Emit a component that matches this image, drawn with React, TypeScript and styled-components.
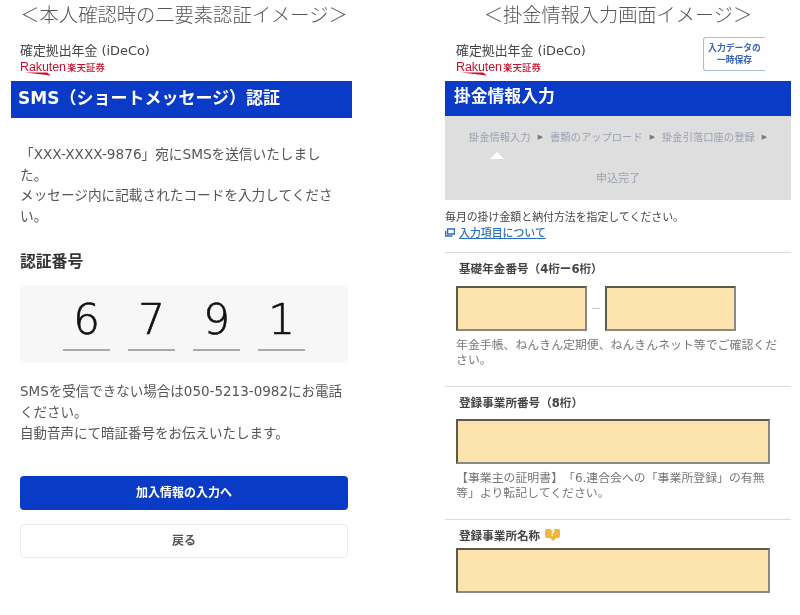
import * as React from "react";
import styled, { createGlobalStyle } from "styled-components";

const GlobalStyle = createGlobalStyle`
  html, body {
    margin: 0;
    padding: 0;
    background: #fff;
  }
  body {
    font-family: "DejaVu Sans", "Noto Sans CJK JP", sans-serif;
    color: #444;
    text-spacing-trim: space-all;
  }
`;

function Logo() {
  return (
    <LogoBlock>
      <LogoTitle>確定拠出年金 (iDeCo)</LogoTitle>
      <RakutenRow>
        <RakutenMark>
          Rakuten
          <svg width="26" height="4" viewBox="0 0 26 4">
            <path d="M0 0.6 L22 0.6 L26 3.6 Z" fill="#c8102e" />
          </svg>
        </RakutenMark>
        <RakutenJa>楽天証券</RakutenJa>
      </RakutenRow>
    </LogoBlock>
  );
}

function Field({ label, wide }: { label?: string; wide?: boolean }) {
  return <FieldBox $wide={wide} aria-label={label} />;
}

export default function App() {
  return (
    <>
      <GlobalStyle />
      <Page>
        <LeftColumn>
          <Title>＜本人確認時の二要素認証イメージ＞</Title>
          <LeftHeader>
            <Logo />
          </LeftHeader>
          <LeftBar>SMS（ショートメッセージ）認証</LeftBar>
          <LeftBody>
            <Message>
              「XXX-XXXX-9876」宛にSMSを送信いたしまし
              <br />
              た。
              <br />
              メッセージ内に記載されたコードを入力してくださ
              <br />
              い。
            </Message>
            <CodeLabel>認証番号</CodeLabel>
            <CodeBox>
              {["6", "7", "9", "1"].map((d) => (
                <Digit key={d}>{d}</Digit>
              ))}
            </CodeBox>
            <Notice>
              SMSを受信できない場合は050-5213-0982にお電話
              <br />
              ください。
              <br />
              自動音声にて暗証番号をお伝えいたします。
            </Notice>
            <PrimaryButton>加入情報の入力へ</PrimaryButton>
            <BackButton>戻る</BackButton>
          </LeftBody>
        </LeftColumn>

        <RightColumn>
          <Title $right>＜掛金情報入力画面イメージ＞</Title>
          <RightHeader>
            <Logo />
            <SaveButton>
              入力データの
              <br />
              一時保存
            </SaveButton>
          </RightHeader>
          <RightBar>掛金情報入力</RightBar>
          <Steps>
            <StepRow>
              <span>掛金情報入力</span>
              <StepArrow>▶</StepArrow>
              <span>書類のアップロード</span>
              <StepArrow>▶</StepArrow>
              <span>掛金引落口座の登録</span>
              <StepArrow>▶</StepArrow>
            </StepRow>
            <StepCaret />
            <StepLast>申込完了</StepLast>
          </Steps>
          <Intro>毎月の掛け金額と納付方法を指定してください。</Intro>
          <HelpLink>
            <svg width="10" height="9" viewBox="0 0 10 9">
              <path d="M2.5 1h7v5h-7zM0.5 3v5h7" fill="none" stroke="#2a6fc0" strokeWidth="1.4" />
            </svg>
            <a>入力項目について</a>
          </HelpLink>

          <Sections>
            <Section $height={134} $gap={10}>
              <FieldLabel>基礎年金番号（4桁ー6桁）</FieldLabel>
              <SplitRow>
                <Field label="基礎年金番号 前半" />
                <Dash>ー</Dash>
                <Field label="基礎年金番号 後半" />
              </SplitRow>
              <Help>
                年金手帳、ねんきん定期便、ねんきんネット等でご確認くだ
                <br />
                さい。
              </Help>
            </Section>

            <Section $height={133} $gap={9}>
              <FieldLabel>登録事業所番号（8桁）</FieldLabel>
              <Field label="登録事業所番号" wide />
              <Help>
                【事業主の証明書】「6.連合会への「事業所登録」の有無
                <br />
                等」より転記してください。
              </Help>
            </Section>

            <Section $height={90} $gap={5}>
              <FieldLabel>
                登録事業所名称
                <Hint>?</Hint>
              </FieldLabel>
              <Field label="登録事業所名称" wide />
            </Section>
          </Sections>
        </RightColumn>
      </Page>
    </>
  );
}

const Page = styled.div`
  width: 800px;
  height: 615px;
  display: flex;
  overflow: hidden;
  filter: blur(0.45px);
`;

const LeftColumn = styled.div`
  width: 445px;
  flex: none;
  padding-left: 11px;
  box-sizing: border-box;
`;

const RightColumn = styled.div`
  width: 346px;
  flex: none;
`;

const Title = styled.div<{ $right?: boolean }>`
  width: 346px;
  height: 30px;
  line-height: 28px;
  text-align: center;
  font-family: "Noto Sans CJK JP", serif;
  font-weight: 300;
  font-size: ${(p) => (p.$right ? "19.2px" : "19.3px")};
  white-space: nowrap;
  color: #555;
`;

const LeftHeader = styled.div`
  height: 51px;
  padding: 13px 0 0 9px;
  box-sizing: border-box;
`;

const RightHeader = styled.div`
  height: 51px;
  padding: 7px 26px 0 11px;
  box-sizing: border-box;
  display: flex;
  justify-content: space-between;
  align-items: flex-start;

  & > div:first-child {
    margin-top: 6px;
  }
`;

const LogoBlock = styled.div`
  display: flex;
  flex-direction: column;
`;

const LogoTitle = styled.div`
  font-size: 12.9px;
  line-height: 16px;
  color: #444;
  white-space: nowrap;
`;

const RakutenRow = styled.div`
  display: flex;
  align-items: flex-start;
  gap: 4px;
  height: 15px;
  margin-top: 1px;
`;

const RakutenMark = styled.div`
  position: relative;
  width: 43px;
  font-family: "Liberation Sans", sans-serif;
  font-size: 12.5px;
  line-height: 14px;
  letter-spacing: -0.1px;
  color: #c8102e;

  svg {
    position: absolute;
    left: 5px;
    top: 12px;
  }
`;

const RakutenJa = styled.div`
  font-family: "Noto Sans CJK JP", sans-serif;
  font-size: 9.5px;
  line-height: 14px;
  font-weight: 500;
  color: #c8102e;
`;

const BlueBar = styled.div`
  background: #0a3bc6;
  color: #fff;
  font-weight: 700;
  box-sizing: border-box;
  white-space: nowrap;
`;

const LeftBar = styled(BlueBar)`
  width: 341px;
  height: 37px;
  line-height: 35px;
  font-size: 17px;
  padding-left: 7px;
`;

const RightBar = styled(BlueBar)`
  height: 35px;
  line-height: 30px;
  font-size: 16.8px;
  padding-left: 9px;
`;

const LeftBody = styled.div`
  width: 328px;
  margin-left: 9px;
`;

const Message = styled.p`
  margin: 26px 0 0;
  font-size: 13.65px;
  line-height: 20.6px;
  color: #555;
  white-space: nowrap;
`;

const CodeLabel = styled.div`
  margin-top: 26px;
  font-size: 15.8px;
  line-height: 20px;
  font-weight: 700;
  color: #333;
`;

const CodeBox = styled.div`
  margin-top: 13px;
  height: 78px;
  background: #f7f7f7;
  display: flex;
  justify-content: center;
  gap: 18.5px;
  padding-top: 9px;
  box-sizing: border-box;
`;

const Digit = styled.div`
  width: 46.5px;
  height: 54.5px;
  border-bottom: 2px solid #aaa;
  text-align: center;
  font-family: "DejaVu Sans", sans-serif;
  font-size: 42px;
  font-weight: 200;
  -webkit-text-stroke: 0.7px #111;
  line-height: 52px;
  color: #111;
`;

const Notice = styled.p`
  margin: 18px 0 0;
  font-size: 13.5px;
  line-height: 20.6px;
  color: #555;
  white-space: nowrap;
`;

const PrimaryButton = styled.div`
  margin-top: 33px;
  height: 34px;
  line-height: 34px;
  background: #0a3bc6;
  border-radius: 4px;
  text-align: center;
  font-size: 12px;
  font-weight: 700;
  color: #fff;
`;

const BackButton = styled.div`
  margin-top: 14px;
  height: 34px;
  box-sizing: border-box;
  line-height: 33px;
  border: 1px solid #eaeaea;
  border-radius: 4px;
  background: #fff;
  text-align: center;
  font-size: 12px;
  font-weight: 700;
  color: #555;
`;

const SaveButton = styled.div`
  width: 62px;
  height: 34px;
  box-sizing: border-box;
  border: 1px solid #a9bbe2;
  border-right: none;
  border-radius: 3px 0 0 3px;
  padding-top: 4px;
  text-align: center;
  font-size: 8.8px;
  line-height: 12px;
  font-weight: 700;
  color: #3a62b8;
  white-space: nowrap;
`;

const Steps = styled.div`
  height: 84px;
  background: #dedede;
  padding-top: 14px;
  box-sizing: border-box;
  color: #9aa2b4;
  font-size: 10.3px;
`;

const StepRow = styled.div`
  display: flex;
  justify-content: center;
  align-items: center;
  gap: 7px;
  line-height: 15px;
  white-space: nowrap;
`;

const StepArrow = styled.span`
  font-size: 7px;
  color: #777;
`;

const StepCaret = styled.div`
  width: 0;
  height: 0;
  margin: 7px 0 0 45px;
  border-left: 7px solid transparent;
  border-right: 7px solid transparent;
  border-bottom: 7px solid #fff;
`;

const StepLast = styled.div`
  margin-top: 12px;
  line-height: 15px;
  text-align: center;
  font-size: 11px;
`;

const Intro = styled.div`
  margin-top: 10px;
  font-size: 10.9px;
  line-height: 15px;
  color: #444;
`;

const HelpLink = styled.div`
  display: flex;
  align-items: center;
  gap: 4px;
  height: 14px;
  font-size: 10.9px;
  color: #2a6fc0;

  a {
    text-decoration: underline;
    font-weight: 500;
  }
`;

const Sections = styled.div`
  margin-top: 13px;
`;

const Section = styled.section<{ $height: number; $gap: number }>`
  height: ${(p) => p.$height}px;
  box-sizing: border-box;
  border-top: 1px solid #dcdcdc;
  padding: 7px 0 0 11px;

  & > div:first-child {
    margin-bottom: ${(p) => p.$gap}px;
  }
`;

const FieldLabel = styled.div`
  display: flex;
  align-items: center;
  height: 16px;
  margin-left: 3px;
  font-size: 11.6px;
  font-weight: 700;
  color: #444;
  white-space: nowrap;
`;

const SplitRow = styled.div`
  display: flex;
  align-items: center;
`;

const Dash = styled.span`
  width: 18px;
  text-align: center;
  font-size: 10px;
  color: #bbb;
`;

const FieldBox = styled.div<{ $wide?: boolean }>`
  width: ${(p) => (p.$wide ? "314px" : "131px")};
  height: 45px;
  box-sizing: border-box;
  background: #fde3ae;
  border: 2px solid #5f5a48;
  border-bottom-color: #8a8a80;
  border-right-color: #8a8a80;
`;

const Help = styled.p`
  margin: 7px 0 0;
  font-size: 11.9px;
  line-height: 14.5px;
  color: #777;
  white-space: nowrap;
`;

const Hint = styled.span`
  position: relative;
  display: inline-block;
  width: 15px;
  height: 9px;
  margin: -3px 0 0 5px;
  border-radius: 2px;
  background: #f2b43c;
  color: #fff;
  font-size: 8px;
  line-height: 9px;
  text-align: center;

  &::after {
    content: "";
    position: absolute;
    left: 5px;
    top: 9px;
    border-left: 3px solid transparent;
    border-right: 3px solid transparent;
    border-top: 3px solid #f2b43c;
  }
`;
